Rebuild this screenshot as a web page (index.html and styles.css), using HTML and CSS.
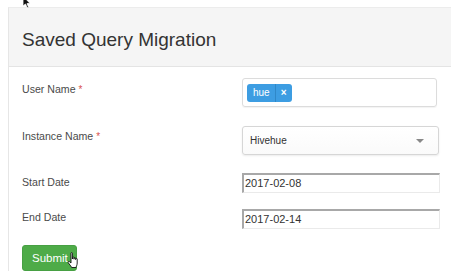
FILE: index.html
```html
<!DOCTYPE html>
<html>
<head>
<meta charset="utf-8">
<link rel="stylesheet" href="styles.css">
</head>
<body>
<svg class="cursor-arrow" width="10" height="10" viewBox="0 0 10 10"><path d="M1 -4 L1 6 L3.5 4 L5.2 7.8 L6.6 7.2 L5 3.6 L8 3.4 Z" fill="#111" stroke="#fff" stroke-width="0.8"/></svg>
<div class="panel">
  <div class="panel-heading"><h2 class="title">Saved Query Migration</h2></div>
  <div class="panel-body">
    <div class="row row-user">
      <label class="lbl lbl-user">User Name <span class="req">*</span></label>
      <div class="tag-input">
        <span class="tag"><span class="tag-text">hue</span><span class="tag-x">×</span></span>
      </div>
    </div>
    <div class="row row-instance">
      <label class="lbl lbl-instance">Instance Name <span class="req">*</span></label>
      <div class="select">
        <span class="select-text">Hivehue</span>
        <span class="caret"></span>
      </div>
    </div>
    <div class="row row-start">
      <label class="lbl lbl-start">Start Date</label>
      <div class="date-input">2017-02-08</div>
    </div>
    <div class="row row-end">
      <label class="lbl lbl-end">End Date</label>
      <div class="date-input">2017-02-14</div>
    </div>
    <div class="btn-wrap">
      <button class="btn-submit">Submit</button>
      <svg class="cursor-hand" width="13" height="17" viewBox="0 0 13 17"><path d="M4 1.2 C4 0.4 5.4 0.4 5.4 1.2 L5.4 7 L5.6 5.6 C5.6 4.9 7 4.9 7 5.6 L7 7.2 L7.2 6.2 C7.2 5.5 8.6 5.5 8.6 6.2 L8.6 7.6 L8.8 6.9 C8.8 6.3 10.2 6.3 10.2 6.9 L10.2 11 C10.2 13 9.4 14 9 15.5 L4.6 15.5 C4 13.8 2.4 12.6 1.2 10.6 C0.7 9.8 1.6 9 2.4 9.6 L4 11 Z" fill="#fff" stroke="#111" stroke-width="0.9"/></svg>
    </div>
  </div>
</div>
</body>
</html>
```
FILE: styles.css
```css
html, body {
  margin: 0;
  padding: 0;
  background: #fff;
  font-family: "Liberation Sans", Arial, Helvetica, sans-serif;
  overflow: hidden;
}
body {
  width: 451px;
  height: 279px;
  position: relative;
}
.cursor-arrow {
  position: absolute;
  left: 22px;
  top: 0;
}
.panel {
  margin: 7px 0 0 8px;
  border-left: 1px solid #e6e6e6;
  border-top: 1px solid #ececec;
}
.panel-heading {
  background: #f5f5f5;
  height: 58px;
  border-bottom: 1px solid #e4e4e4;
  padding-left: 13px;
  display: flex;
  align-items: center;
}
.title {
  margin: 5px 0 0 0;
  font-size: 19px;
  font-weight: normal;
  color: #333;
}
.panel-body {
  padding: 11px 0 0 13px;
}
.row {
  display: flex;
  align-items: flex-start;
}
.lbl {
  width: 220px;
  font-size: 10.6px;
  line-height: 13px;
  color: #4a4a4a;
}
.req {
  color: #d9534f;
  font-size: 10px;
}
.lbl-user { padding-top: 5px; }
.lbl-instance { padding-top: 4px; }
.lbl-start { padding-top: 3px; }
.lbl-end { padding-top: 2px; }
.row-instance { margin-top: 19px; }
.row-start { margin-top: 18px; }
.row-end { margin-top: 16px; }
.tag-input {
  width: 195px;
  height: 29px;
  border: 1px solid #dcdcdc;
  border-radius: 3px;
  box-shadow: 0 1px 1px rgba(0,0,0,0.05);
  display: flex;
  align-items: center;
  padding-left: 4px;
  box-sizing: border-box;
}
.tag {
  display: flex;
  height: 18px;
  background: #3d9de2;
  border-radius: 3px;
  color: #fff;
  font-size: 10px;
  align-items: stretch;
}
.tag-text {
  padding: 0 5px 0 6px;
  line-height: 17px;
  border-right: 1px solid #2f88c8;
}
.tag-x {
  padding: 0 5px;
  line-height: 18px;
  font-size: 10px;
  font-weight: bold;
}
.select {
  width: 197px;
  height: 29px;
  box-sizing: border-box;
  border: 1px solid #d6d6d6;
  border-radius: 3px;
  background: linear-gradient(#fff, #fafafa);
  box-shadow: 0 1px 2px rgba(0,0,0,0.08);
  display: flex;
  align-items: center;
  justify-content: space-between;
  padding: 0 14px 0 7px;
}
.select-text {
  font-size: 10px;
  color: #333;
}
.caret {
  width: 0;
  height: 0;
  border-left: 4px solid transparent;
  border-right: 4px solid transparent;
  border-top: 4px solid #888;
}
.date-input {
  width: 198px;
  height: 20px;
  box-sizing: border-box;
  border-top: 2px solid #a8a8a8;
  border-left: 2px solid #a8a8a8;
  border-right: 1px solid #eaeaea;
  border-bottom: 1px solid #eaeaea;
  font-size: 11px;
  line-height: 17px;
  padding-left: 1px;
  color: #333;
}
.btn-wrap {
  margin-top: 16px;
  position: relative;
  width: 60px;
}
.btn-submit {
  display: block;
  width: 55px;
  height: 26px;
  background: #4eab48;
  border: 1px solid #47a043;
  border-radius: 3px;
  color: #fff;
  font-family: "Liberation Sans", Arial, sans-serif;
  font-size: 11.5px;
  padding: 0;
  text-align: left;
  padding-left: 9px;
}
.cursor-hand {
  position: absolute;
  left: 45px;
  top: 7px;
}
```
